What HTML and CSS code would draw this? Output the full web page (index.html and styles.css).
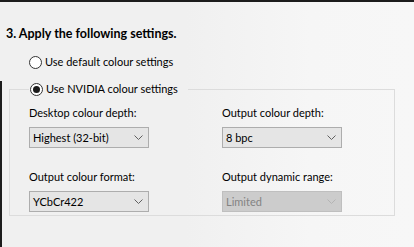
FILE: index.html
```html
<!DOCTYPE html>
<html>
<head>
<meta charset="utf-8">
<link rel="stylesheet" href="styles.css">
</head>
<body>
<div class="page">
  <h1 class="heading">3. Apply the following settings.</h1>
  <div class="radio radio-first"><span class="circle"></span><span>Use default colour settings</span></div>
  <div class="lower">
    <fieldset class="group">
      <legend class="radio"><span class="circle checked"></span><span>Use NVIDIA colour settings</span></legend>
      <div class="grid">
        <div class="field">
          <div class="label">Desktop colour depth:</div>
          <div class="select"><span>Highest (32-bit)</span><svg class="chev" width="9" height="5" viewBox="0 0 9 5"><path d="M0.5 0.5 L4.5 4.5 L8.5 0.5" fill="none" stroke="#606060" stroke-width="1"/></svg></div>
        </div>
        <div class="field">
          <div class="label">Output colour depth:</div>
          <div class="select"><span>8 bpc</span><svg class="chev" width="9" height="5" viewBox="0 0 9 5"><path d="M0.5 0.5 L4.5 4.5 L8.5 0.5" fill="none" stroke="#606060" stroke-width="1"/></svg></div>
        </div>
        <div class="field">
          <div class="label">Output colour format:</div>
          <div class="select"><span>YCbCr422</span><svg class="chev" width="9" height="5" viewBox="0 0 9 5"><path d="M0.5 0.5 L4.5 4.5 L8.5 0.5" fill="none" stroke="#606060" stroke-width="1"/></svg></div>
        </div>
        <div class="field">
          <div class="label">Output dynamic range:</div>
          <div class="select disabled"><span>Limited</span><svg class="chev" width="9" height="5" viewBox="0 0 9 5"><path d="M0.5 0.5 L4.5 4.5 L8.5 0.5" fill="none" stroke="#b4b4b4" stroke-width="1"/></svg></div>
        </div>
      </div>
    </fieldset>
  </div>
</div>
</body>
</html>
```

FILE: styles.css
```css
html, body {
  margin: 0;
  padding: 0;
}
body {
  width: 414px;
  height: 247px;
  overflow: hidden;
  background: linear-gradient(to right, #f0f0f0 0%, #f0f0f0 45%, #f6f6f6 75%, #f7f7f7 100%);
  font-family: Lato, "Noto Sans", sans-serif;
  font-size: 11px;
  color: #000;
}
.page {
  border-top: 2px solid #1c1c1c;
  height: 245px;
  display: flex;
  flex-direction: column;
}
.heading {
  margin: 24px 0 0 6px;
  font-size: 12.5px;
  font-weight: 700;
  line-height: 16px;
  height: 16px;
  white-space: nowrap;
}
.radio {
  display: flex;
  align-items: center;
  gap: 3px;
  line-height: 16px;
  white-space: nowrap;
}
.radio-first {
  margin: 12px 0 0 29px;
}
.circle {
  width: 11px;
  height: 11px;
  border: 1px solid #333;
  border-radius: 50%;
  background: #fff;
  display: inline-flex;
  align-items: center;
  justify-content: center;
  flex: none;
}
.circle.checked::after {
  content: "";
  width: 7px;
  height: 7px;
  border-radius: 50%;
  background: #1a1a1a;
}
.lower {
  flex: 1;
  border-left: 2px solid #1c1c1c;
  margin-top: 11px;
  padding: 0 0 0 7px;
}
.group {
  margin: 0;
  width: 386px;
  box-sizing: border-box;
  border: 1px solid #dcdcdc;
  padding: 8px 0 11px 19px;
  height: 135px;
}
.group legend {
  padding: 0 10px 0 1px;
  margin-left: 0;
}
.grid {
  display: grid;
  grid-template-columns: 120px 120px;
  column-gap: 73px;
  row-gap: 21px;
}
.label {
  line-height: 16px;
  margin-bottom: 6px;
  white-space: nowrap;
}
.select {
  box-sizing: border-box;
  width: 120px;
  height: 21px;
  background: #e5e5e5;
  border: 1px solid #adadad;
  display: flex;
  align-items: center;
  justify-content: space-between;
  padding: 0 5px 0 3px;
  white-space: nowrap;
}
.select.disabled {
  background: #cccccc;
  border-color: #bfbfbf;
  color: #838383;
}
.chev {
  display: block;
}
```
